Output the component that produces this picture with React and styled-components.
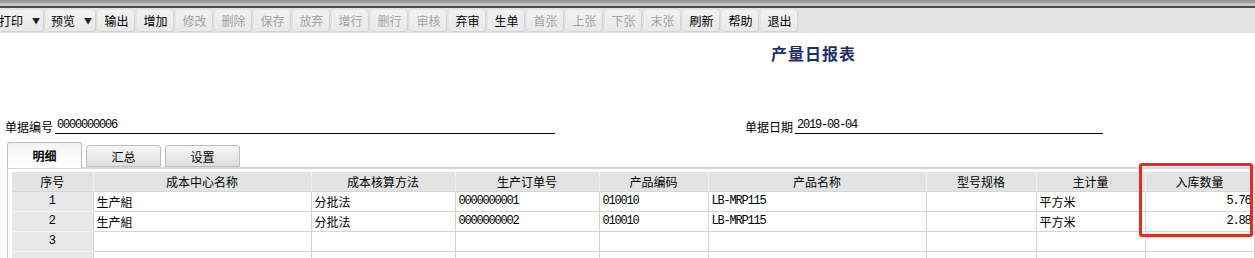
import React from "react";
import styled, { createGlobalStyle } from "styled-components";

const GlobalStyle = createGlobalStyle`
  body {
    margin: 0;
    background: #ffffff;
    font-family: "Noto Sans CJK SC", "Liberation Sans", sans-serif;
    font-size: 12px;
    color: #000;
    overflow: hidden;
  }
`;

const Page = styled.div`
  position: relative;
  width: 1255px;
  height: 258px;
  overflow: hidden;
`;

const TopStrip = styled.div`
  height: 6px;
  background: linear-gradient(#8e8e93, #a9a9ae 45%, #d4d4d8 80%, #bdbdc1);
  border-bottom: 2px solid #4c4c4c;
`;

const Toolbar = styled.div`
  height: 25px;
  background: #e3e3e3;
  display: flex;
  align-items: center;
  gap: 4px;
`;

const ToolButton = styled.div`
  height: 20px;
  width: ${props => props.$width || 35}px;
  box-sizing: border-box;
  display: flex;
  align-items: center;
  justify-content: ${props => (props.$menu ? "flex-end" : "center")};
  padding-right: ${props => (props.$menu ? 3 : 0)}px;
  gap: 9px;
  border-radius: 3px;
  background: linear-gradient(#f1f1f1, #e9e9e9);
  box-shadow: 1px 1px 1px rgba(0, 0, 0, 0.07), -1px -1px 1px rgba(255, 255, 255, 0.6);
  color: ${props => (props.$disabled ? "#a3a3a3" : "#000")};
  font-size: 12px;
  line-height: 20px;
  white-space: nowrap;
`;

const Arrow = styled.span`
  font-size: 8px;
  color: #222;
`;

const TitleRow = styled.div`
  padding: 10px 0 0 771px;
  height: 20px;
  line-height: 20px;
`;

const Title = styled.span`
  font-size: 16px;
  font-weight: 700;
  letter-spacing: 1px;
  color: #1b2f6c;
`;

const FieldsRow = styled.div`
  display: flex;
  margin-top: 55px;
  height: 16px;
`;

const Field = styled.div`
  display: flex;
  align-items: flex-end;
  margin-left: ${props => props.$left}px;
`;

const Label = styled.span`
  line-height: 15px;
  margin-right: 2px;
`;

const Value = styled.span`
  display: block;
  width: ${props => props.$width}px;
  height: 15px;
  line-height: 15px;
  border-bottom: 1px solid #000;
  font-family: "Liberation Mono", monospace;
  font-size: 12px;
  letter-spacing: -1.2px;
  padding-left: 2px;
`;

const Tabs = styled.div`
  display: flex;
  align-items: flex-end;
  gap: 4px;
  margin: 8px 0 0 7px;
  height: 25px;
`;

const Tab = styled.div`
  width: 75px;
  box-sizing: border-box;
  height: ${props => (props.$active ? 26 : 22)}px;
  margin-bottom: ${props => (props.$active ? -1 : 0)}px;
  border: 1px solid #bdbdbd;
  border-bottom: ${props => (props.$active ? "none" : "1px solid #bdbdbd")};
  border-radius: 3px 3px 0 0;
  background: ${props =>
    props.$active
      ? "linear-gradient(#f4f4f4, #ffffff)"
      : "linear-gradient(#f6f6f6, #dedede)"};
  display: flex;
  align-items: center;
  justify-content: center;
  font-weight: ${props => (props.$active ? 700 : 400)};
  position: relative;
  z-index: 1;
`;

const Panel = styled.div`
  margin-left: 7px;
  border-top: 2px solid #d9d9d9;
  border-left: 1px solid #c9c9c9;
  padding: 3px 0 0 4px;
`;

const Grid = styled.table`
  border-collapse: collapse;
  table-layout: fixed;
  width: 1242px;
`;

const HeadCell = styled.th`
  height: 19px;
  padding: 0;
  background: #e3e3e3;
  border-right: 1px solid #f2f2f2;
  border-bottom: 1px solid #d6d6d6;
  font-weight: 400;
  font-size: 12px;
  text-align: center;
  line-height: 19px;
`;

const IndexCell = styled.td`
  height: 19px;
  padding: 0;
  background: #e8e8e8;
  border-bottom: 1px solid #f6f6f6;
  border-right: 1px solid #d6d6d6;
  text-align: center;
  font-family: "Liberation Mono", monospace;
  font-size: 12px;
  line-height: 19px;
`;

const Cell = styled.td`
  height: 19px;
  padding: 0 3px;
  border-right: 1px solid #d6d6d6;
  border-bottom: 1px solid #d6d6d6;
  text-align: ${props => (props.$right ? "right" : "left")};
  font-family: ${props =>
    props.$mono ? '"Liberation Mono", monospace' : '"Noto Sans CJK SC", sans-serif'};
  letter-spacing: ${props => (props.$mono ? "-1.2px" : "0")};
  font-size: 12px;
  line-height: 19px;
  white-space: nowrap;
  overflow: hidden;
`;

const Highlight = styled.div`
  position: absolute;
  left: 1139px;
  top: 163px;
  width: 114px;
  height: 74px;
  box-sizing: border-box;
  border: 3px solid #ea2a20;
  border-radius: 3px;
  pointer-events: none;
`;

const tools = [
  { label: "打印", menu: true, width: 43 },
  { label: "预览", menu: true, width: 48 },
  { label: "输出" },
  { label: "增加" },
  { label: "修改", off: true },
  { label: "删除", off: true },
  { label: "保存", off: true },
  { label: "放弃", off: true },
  { label: "增行", off: true },
  { label: "删行", off: true },
  { label: "审核", off: true },
  { label: "弃审" },
  { label: "生单" },
  { label: "首张", off: true },
  { label: "上张", off: true },
  { label: "下张", off: true },
  { label: "末张", off: true },
  { label: "刷新" },
  { label: "帮助" },
  { label: "退出" }
];

const columns = [
  { title: "序号", width: 81 },
  { title: "成本中心名称", width: 218 },
  { title: "成本核算方法", width: 144 },
  { title: "生产订单号", width: 144 },
  { title: "产品编码", width: 109 },
  { title: "产品名称", width: 218 },
  { title: "型号规格", width: 110 },
  { title: "主计量", width: 109 },
  { title: "入库数量", width: 109 }
];

const rows = [
  ["生产組", "分批法", "0000000001", "010010", "LB-MRP115", "", "平方米", "5.76"],
  ["生产組", "分批法", "0000000002", "010010", "LB-MRP115", "", "平方米", "2.88"],
  ["", "", "", "", "", "", "", ""],
  ["", "", "", "", "", "", "", ""]
];

const monoCols = [2, 3, 4, 7];

const App = () => {
  return (
    <Page>
      <GlobalStyle />
      <TopStrip />
      <Toolbar>
        {tools.map(t => (
          <ToolButton
            key={t.label}
            $menu={t.menu}
            $width={t.width}
            $disabled={t.off}
          >
            {t.label}
            {t.menu && <Arrow>▼</Arrow>}
          </ToolButton>
        ))}
      </Toolbar>

      <TitleRow>
        <Title>产量日报表</Title>
      </TitleRow>

      <FieldsRow>
        <Field $left={5}>
          <Label>单据编号</Label>
          <Value $width={498}>0000000006</Value>
        </Field>
        <Field $left={190}>
          <Label>单据日期</Label>
          <Value $width={306}>2019-08-04</Value>
        </Field>
      </FieldsRow>

      <Tabs>
        <Tab $active>明细</Tab>
        <Tab>汇总</Tab>
        <Tab>设置</Tab>
      </Tabs>

      <Panel>
        <Grid>
          <colgroup>
            {columns.map(c => (
              <col key={c.title} style={{ width: c.width }} />
            ))}
          </colgroup>
          <thead>
            <tr>
              {columns.map(c => (
                <HeadCell key={c.title}>{c.title}</HeadCell>
              ))}
            </tr>
          </thead>
          <tbody>
            {rows.map((r, i) => (
              <tr key={i}>
                <IndexCell>{i < 3 ? i + 1 : ""}</IndexCell>
                {r.map((v, j) => (
                  <Cell key={j} $mono={monoCols.includes(j)} $right={j === 7}>
                    {v}
                  </Cell>
                ))}
              </tr>
            ))}
          </tbody>
        </Grid>
      </Panel>

      <Highlight />
    </Page>
  );
};

export default App;
